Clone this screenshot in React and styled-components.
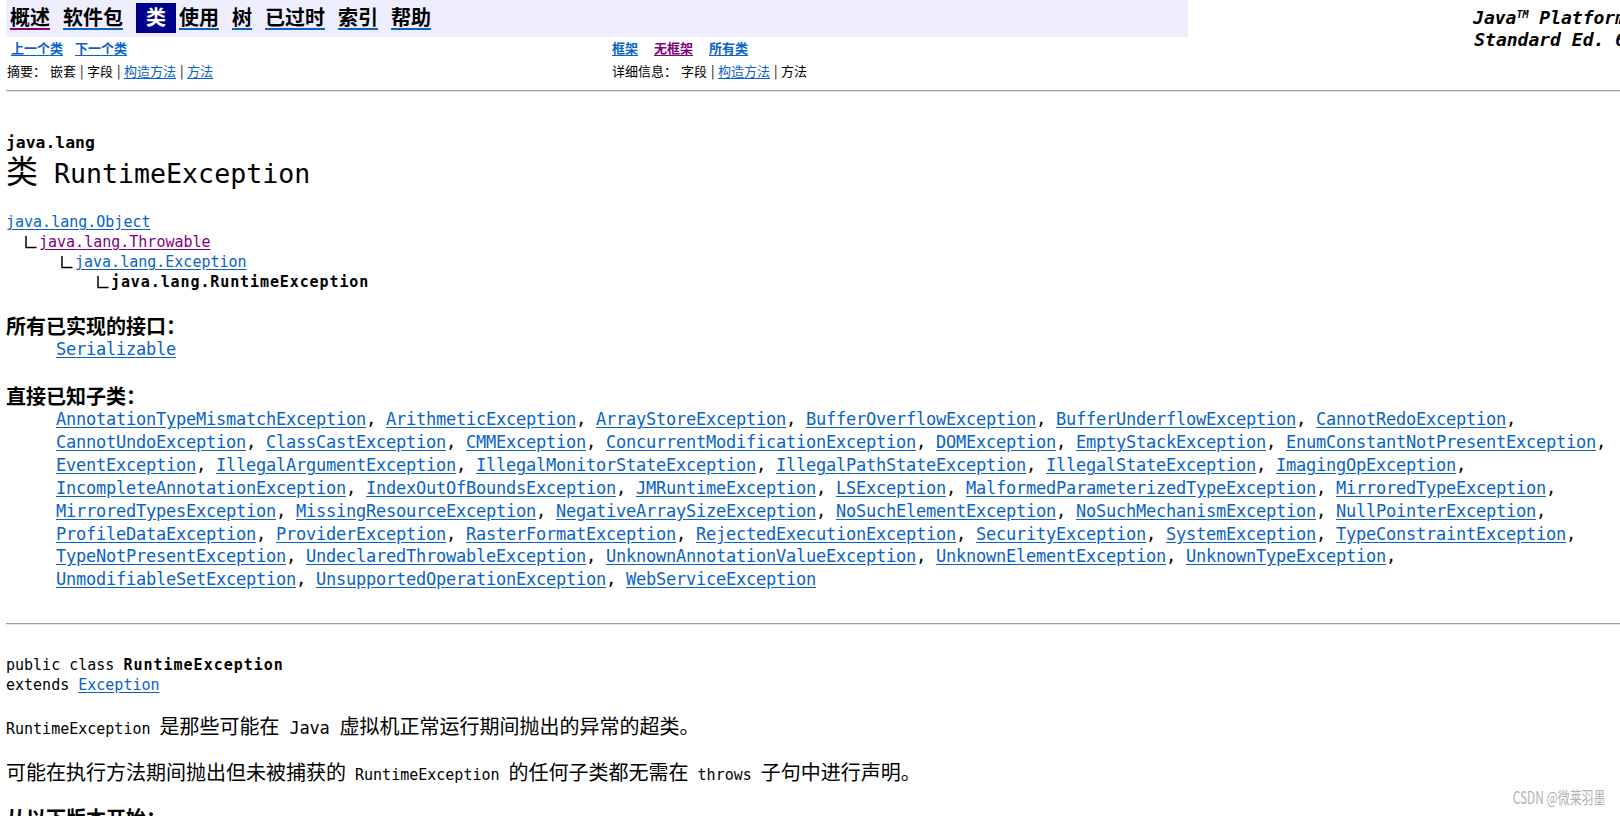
import React from 'react';
import styled, { createGlobalStyle } from 'styled-components';

const LINK = '#0a62c6';
const VISITED = '#800080';
const MONO = '"DejaVu Sans Mono", "Liberation Mono", "Noto Sans CJK SC", monospace';
const CJK = '"Noto Sans CJK SC", "Noto Sans", sans-serif';

const Global = createGlobalStyle`
  html, body { margin: 0; padding: 0; overflow: hidden; background: #fff; }
  body { font-family: ${CJK}; color: #000; }
  * { box-sizing: border-box; }
`;

const Page = styled.div`
  position: relative;
  width: 1620px;
  height: 816px;
  padding-left: 6px;
  overflow: hidden;
`;

/* ---------- header ---------- */
const Header = styled.div`
  display: flex;
  align-items: flex-start;
`;

const HeaderMain = styled.div`
  flex: none;
  width: 1182px;
`;

const NavBar = styled.div`
  height: 37px;
  background: #eeeeff;
  display: flex;
  align-items: flex-start;
  padding: 3px 0 0 4px;
`;

const NavItem = styled.a`
  display: block;
  height: 30px;
  line-height: 28px;
  font-size: 20px;
  font-weight: 700;
  font-family: ${CJK};
  color: #000;
  padding-right: 10px;
  margin-right: 3px;
  text-decoration: underline;
  text-decoration-color: ${(p) => (p.$visited ? VISITED : LINK)};
  text-decoration-thickness: 1.5px;
  text-underline-offset: 3px;
`;

const NavCurrent = styled.span`
  display: block;
  height: 30px;
  line-height: 28px;
  font-size: 20px;
  font-weight: 700;
  padding: 0 10px;
  margin-right: 3px;
  background: #00008b;
  color: #fff;
`;

const SubRow = styled.div`
  display: grid;
  grid-template-columns: 606px 1fr;
  height: ${(p) => p.$h}px;
  font-size: 13px;
  font-family: ${CJK};
`;

const SubCell = styled.div`
  display: flex;
  align-items: center;
  gap: ${(p) => p.$gap}px;
  padding-left: ${(p) => p.$pl || 0}px;
  white-space: nowrap;
`;

const SmallLink = styled.a`
  color: ${(p) => (p.$visited ? VISITED : LINK)};
  font-weight: ${(p) => (p.$bold ? 700 : 400)};
  text-decoration: underline;
  text-underline-offset: 2px;
`;

const Plain = styled.span``;

const Pipe = styled.span`
  display: inline-block;
  width: 3px;
  text-align: center;
`;

const PlatformCell = styled.div`
  flex: 1;
  margin-right: -6px;
  padding-top: 7px;
  text-align: right;
  font-family: ${MONO};
  font-size: 18px;
  line-height: 22px;
  font-style: italic;
  font-weight: 700;
  white-space: nowrap;
`;

const Sup = styled.sup`
  font-size: 10px;
  line-height: 0;
  vertical-align: 6px;
`;

const Rule = styled.div`
  margin-top: ${(p) => p.$mt}px;
  height: 2px;
  margin-right: -6px;
  border-top: 1px solid #a0a0a0;
  border-bottom: 1px solid #e6e6e6;
`;

/* ---------- class heading ---------- */
const PackageName = styled.div`
  margin-top: 41px;
  font-family: ${MONO};
  font-weight: 700;
  font-size: 16.4px;
  line-height: 20px;
`;

const Title = styled.h2`
  margin: 0;
  font-family: ${MONO};
  font-weight: 400;
  font-size: 26.6px;
  line-height: 32px;
  white-space: pre;
`;

const TitleCjk = styled.span`
  font-family: ${CJK};
  font-size: 32px;
`;

/* ---------- inheritance tree ---------- */
const Tree = styled.div`
  margin-top: 22px;
`;

const TreeRow = styled.div`
  display: flex;
  align-items: center;
  height: 20px;
  padding-left: ${(p) => p.$indent}px;
  font-family: ${MONO};
  font-size: 15px;
`;

const TreeIcon = styled.svg`
  flex: none;
  width: 15px;
  height: 20px;
`;

const CodeLink = styled.a`
  color: ${(p) => (p.$visited ? VISITED : LINK)};
  text-decoration: underline;
  text-underline-offset: 2px;
  white-space: pre;
`;

const TreeCurrent = styled.b`
  letter-spacing: 0.9px;
`;

/* ---------- definition lists ---------- */
const DefTerm = styled.div`
  margin-top: ${(p) => p.$mt}px;
  font-family: ${CJK};
  font-weight: 700;
  font-size: 20px;
  line-height: 24px;
`;

const DefBody = styled.div`
  padding-left: 50px;
`;

const DefLine = styled.div`
  height: 22.85px;
  line-height: 22.85px;
  font-family: ${MONO};
  font-size: 17px;
  letter-spacing: -0.235px;
  white-space: pre;
`;

/* ---------- declaration & description ---------- */
const Decl = styled.div`
  margin-top: 30px;
  font-family: ${MONO};
  font-size: 15px;
  line-height: 20px;
  white-space: pre;
`;

const DeclName = styled.b`
  letter-spacing: 1px;
`;

const Para = styled.p`
  margin: ${(p) => p.$mt}px 0 0;
  font-family: ${CJK};
  font-size: 20px;
  line-height: 24px;
  white-space: nowrap;
`;

const Code = styled.span`
  font-family: ${MONO};
  font-size: 15px;
  white-space: pre;
`;

const Latin = styled.span`
  font-family: ${MONO};
  font-size: 17px;
  letter-spacing: -0.235px;
  white-space: pre;
`;

const Watermark = styled.div`
  position: absolute;
  right: 15px;
  top: 785px;
  font-family: ${CJK};
  font-size: 17px;
  line-height: 24px;
  color: #b3b3b3;
  transform: scaleX(0.7);
  transform-origin: right center;
  white-space: nowrap;
`;

const NAV = [
  { label: '概述', visited: true },
  { label: '软件包' },
  { label: '类', current: true },
  { label: '使用' },
  { label: '树' },
  { label: '已过时' },
  { label: '索引' },
  { label: '帮助' },
];

const SUBCLASSES = [
  ['AnnotationTypeMismatchException', 'ArithmeticException', 'ArrayStoreException', 'BufferOverflowException', 'BufferUnderflowException', 'CannotRedoException'],
  ['CannotUndoException', 'ClassCastException', 'CMMException', 'ConcurrentModificationException', 'DOMException', 'EmptyStackException', 'EnumConstantNotPresentException'],
  ['EventException', 'IllegalArgumentException', 'IllegalMonitorStateException', 'IllegalPathStateException', 'IllegalStateException', 'ImagingOpException'],
  ['IncompleteAnnotationException', 'IndexOutOfBoundsException', 'JMRuntimeException', 'LSException', 'MalformedParameterizedTypeException', 'MirroredTypeException'],
  ['MirroredTypesException', 'MissingResourceException', 'NegativeArraySizeException', 'NoSuchElementException', 'NoSuchMechanismException', 'NullPointerException'],
  ['ProfileDataException', 'ProviderException', 'RasterFormatException', 'RejectedExecutionException', 'SecurityException', 'SystemException', 'TypeConstraintException'],
  ['TypeNotPresentException', 'UndeclaredThrowableException', 'UnknownAnnotationValueException', 'UnknownElementException', 'UnknownTypeException'],
  ['UnmodifiableSetException', 'UnsupportedOperationException', 'WebServiceException'],
];

function InheritIcon() {
  return (
    <TreeIcon viewBox="0 0 15 20">
      <path d="M2 4 V15.5 H12.5" fill="none" stroke="#000" strokeWidth="1.5" />
    </TreeIcon>
  );
}

export default function App() {
  const lastLine = SUBCLASSES.length - 1;
  return (
    <>
      <Global />
      <Page>
        <Header>
          <HeaderMain>
            <NavBar>
              {NAV.map((n) =>
                n.current ? (
                  <NavCurrent key={n.label}>{n.label}</NavCurrent>
                ) : (
                  <NavItem key={n.label} href="#" $visited={n.visited}>
                    {n.label}
                  </NavItem>
                )
              )}
            </NavBar>
            <SubRow $h={21}>
              <SubCell $gap={12} $pl={5}>
                <SmallLink href="#" $bold>上一个类</SmallLink>
                <SmallLink href="#" $bold>下一个类</SmallLink>
              </SubCell>
              <SubCell $gap={16}>
                <SmallLink href="#" $bold>框架</SmallLink>
                <SmallLink href="#" $bold $visited>无框架</SmallLink>
                <SmallLink href="#" $bold>所有类</SmallLink>
              </SubCell>
            </SubRow>
            <SubRow $h={24}>
              <SubCell $gap={4} $pl={1}>
                <Plain>摘要：</Plain>
                <Plain>嵌套</Plain>
                <Pipe>|</Pipe>
                <Plain>字段</Plain>
                <Pipe>|</Pipe>
                <SmallLink href="#">构造方法</SmallLink>
                <Pipe>|</Pipe>
                <SmallLink href="#">方法</SmallLink>
              </SubCell>
              <SubCell $gap={4}>
                <Plain>详细信息：</Plain>
                <Plain>字段</Plain>
                <Pipe>|</Pipe>
                <SmallLink href="#">构造方法</SmallLink>
                <Pipe>|</Pipe>
                <Plain>方法</Plain>
              </SubCell>
            </SubRow>
          </HeaderMain>
          <PlatformCell>
            Java<Sup>TM</Sup>{'\u00a0'}Platform
            <br />
            Standard{'\u00a0'}Ed.{'\u00a0'}6
          </PlatformCell>
        </Header>
        <Rule $mt={8} />

        <PackageName>java.lang</PackageName>
        <Title>
          <TitleCjk>类</TitleCjk> RuntimeException
        </Title>

        <Tree>
          <TreeRow $indent={0}>
            <CodeLink href="#">java.lang.Object</CodeLink>
          </TreeRow>
          <TreeRow $indent={18}>
            <InheritIcon />
            <CodeLink href="#" $visited>java.lang.Throwable</CodeLink>
          </TreeRow>
          <TreeRow $indent={54}>
            <InheritIcon />
            <CodeLink href="#">java.lang.Exception</CodeLink>
          </TreeRow>
          <TreeRow $indent={90}>
            <InheritIcon />
            <TreeCurrent>java.lang.RuntimeException</TreeCurrent>
          </TreeRow>
        </Tree>

        <DefTerm $mt={21.5}>所有已实现的接口：</DefTerm>
        <DefBody>
          <DefLine>
            <CodeLink href="#">Serializable</CodeLink>
          </DefLine>
        </DefBody>

        <DefTerm $mt={24}>直接已知子类：</DefTerm>
        <DefBody>
          {SUBCLASSES.map((line, i) => (
            <DefLine key={i}>
              {line.map((name, j) => {
                const isLast = j === line.length - 1;
                const sep = isLast ? (i === lastLine ? '' : ',') : ', ';
                return (
                  <React.Fragment key={name}>
                    <CodeLink href="#">{name}</CodeLink>
                    {sep}
                  </React.Fragment>
                );
              })}
            </DefLine>
          ))}
        </DefBody>

        <Rule $mt={32} />

        <Decl>
          public class <DeclName>RuntimeException</DeclName>
          {'\n'}extends <CodeLink href="#">Exception</CodeLink>
        </Decl>

        <Para $mt={19}>
          <Code>RuntimeException </Code>是那些可能在<Latin> Java </Latin>虚拟机正常运行期间抛出的异常的超类。
        </Para>
        <Para $mt={19}>
          可能在执行方法期间抛出但未被捕获的<Code> RuntimeException </Code>的任何子类都无需在<Code> throws </Code>子句中进行声明。
        </Para>
        <DefTerm $mt={19}>从以下版本开始：</DefTerm>

        <Watermark>CSDN @微莱羽墨</Watermark>
      </Page>
    </>
  );
}
